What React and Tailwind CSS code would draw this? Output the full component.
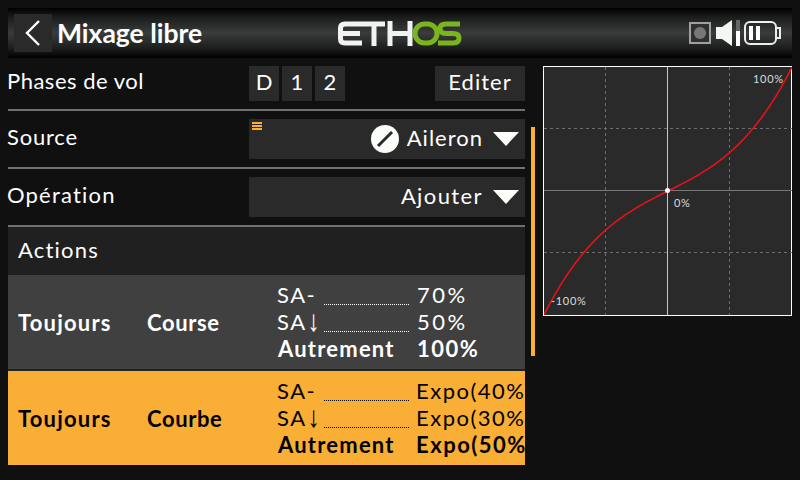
const font = "font-['Lato','Liberation_Sans',sans-serif]";

function Logo() {
  return (
    <svg width="124" height="27" viewBox="0 0 124 27" className="block">
      <g fill="none" strokeWidth="5">
        <path d="M24 4H7Q2.500 4 2.500 8V19Q2.500 23 7 23H24M2.500 13.500H22" stroke="#f2f2f2" />
        <path d="M24 4H47M36 4V26" stroke="#f2f2f2" />
        <path d="M52 1V26M72 1V26M52 13.500H72" stroke="#f2f2f2" />
        <rect x="77" y="4" width="22" height="19" rx="9.500" stroke="#7ab51d" />
        <path d="M122 4H108Q102 4 102 8.750Q102 13.500 108 13.500H115Q121 13.500 121 18.250Q121 23 115 23H100" stroke="#7ab51d" />
      </g>
    </svg>
  );
}

function Curve() {
  const W = 248;
  const c = W / 2;
  const pts = [];
  for (let i = 0; i <= 124; i++) {
    const x = -1 + (2 * i) / 124;
    const y = 0.5 * x * x * x + 0.5 * x;
    pts.push(`${(c + x * c).toFixed(2)},${(c - y * c).toFixed(2)}`);
  }
  return (
    <svg width="248" height="248" viewBox="0 0 248 248" className="block">
      <g stroke="#6e6e6e" strokeWidth="1" strokeDasharray="3 3" fill="none">
        <path d="M61.500 0V248M185.500 0V248M0 61.500H248M0 185.500H248" />
      </g>
      <path d="M0 123.500H248" stroke="#777" strokeWidth="1" />
      <path d="M123.500 0V248" stroke="#f5c078" strokeWidth="1" />
      <polyline points={pts.join(" ")} fill="none" stroke="#f01018" strokeWidth="1.500" />
      <circle cx="123.500" cy="123.500" r="2.500" fill="#fff" />
      <g fill="#dcdcdc" fontSize="11" fontFamily="Lato, sans-serif" letterSpacing="0.7">
        <text x="209" y="16">100%</text>
        <text x="130" y="140">0%</text>
        <text x="7" y="238">-100%</text>
      </g>
    </svg>
  );
}

function Caret() {
  return (
    <svg width="26" height="14" viewBox="0 0 26 14" className="block">
      <path d="M0 0H26L13 14Z" fill="#fbfdf9" />
    </svg>
  );
}

function Row({ label, children, h, labelClass }) {
  return (
    <div className={`flex justify-between border-b-2 border-[#707070] ${h}`}>
      <span className={`-ml-px text-[22px] leading-6 text-white ${labelClass}`}>{label}</span>
      {children}
    </div>
  );
}

function Data({ rows, dot, text, bg, name, kind, valueTrack }) {
  return (
    <div className={`flex h-[94px] items-center pl-[10px] ${bg} ${text}`}>
      <span className="w-[129px] text-[22px] font-bold tracking-[1.2px]">{name}</span>
      <span className="w-[130px] text-[22px] font-bold tracking-[0.6px]">{kind}</span>
      <div className="flex min-w-0 flex-1 -translate-y-px flex-col">
        {rows.map((r, i) => (
          <div key={i} className={`flex h-[27px] items-end whitespace-nowrap text-[22px] leading-[27px] ${r[2] ? "font-bold" : "tracking-[1.5px]"}`}>
            {r[2] ? (
              <span className="w-[140px] shrink-0 pl-px tracking-[1.2px]">{r[0]}</span>
            ) : (
              <>
                <span className="w-[47px] shrink-0">{r[0]}{r[3] && <span className="ml-px inline-block origin-[50%_80%] scale-x-110 scale-y-[1.3] font-['Liberation_Sans'] text-[23px] leading-[18px]">↓</span>}</span>
                <span className={`mb-[3px] mr-[8px] h-px w-[85px] shrink-0 border-b border-dotted ${dot}`} />
              </>
            )}
            <span className={r[2] ? valueTrack[1] : valueTrack[0]}>{r[1]}</span>
          </div>
        ))}
      </div>
    </div>
  );
}

export default function App() {
  return (
    <div className={`h-[480px] w-[800px] overflow-hidden bg-[#101010] pt-2 ${font}`}>
      <header className="mx-2 flex h-[50px] items-center bg-[linear-gradient(#000_0%,#1d1f1f_20%,#3a3c3c_50%,#1d1f1f_80%,#000_100%)]">
        <div className="flex w-[330px] items-center">
          <div className="ml-[6px] flex h-[38px] w-[38px] items-center justify-center bg-[#2a2a2a]">
            <svg width="20" height="30" viewBox="0 0 20 30"><path d="M16 3L4 15L16 27" fill="none" stroke="#fff" strokeWidth="2.400" /></svg>
          </div>
          <span className="ml-[5px] text-[26.500px] font-bold leading-none text-white">Mixage libre</span>
        </div>
        <Logo />
        <div className="flex flex-1 items-center justify-end gap-[5px] pr-[10px]">
          <div className="flex h-[22px] w-[22px] items-center justify-center border-2 border-[#a0a0a0] bg-[#303030]">
            <span className="h-[12px] w-[12px] rounded-full bg-[#777]" />
          </div>
          <svg width="25" height="26" viewBox="0 0 25 26" className="block">
            <path d="M0 7H6L16 0V26L6 19H0Z" fill="#f4f6f2" />
            <rect x="20" y="0" width="4" height="11" fill="#666" />
            <rect x="20" y="11" width="4" height="15" fill="#fff" />
          </svg>
          <svg width="38" height="24" viewBox="0 0 38 24" className="-ml-[2px] block">
            <rect x="1" y="1" width="31" height="22" rx="5" fill="none" stroke="#eee" strokeWidth="2" />
            <path d="M33 7H36V17H33" fill="none" stroke="#eee" strokeWidth="2" />
            <rect x="5" y="5" width="4" height="14" fill="#fff" />
            <rect x="12" y="5" width="4" height="14" fill="#fff" />
          </svg>
        </div>
      </header>

      <main className="flex pl-2">
        <section className="w-[517px]">
          <Row label="Phases de vol" h="h-[53px]" labelClass="pt-[11px] tracking-[0.5px]">
            <div className="flex h-[35px] w-[276px] translate-y-2 items-center">
              {["D", "1", "2"].map((k) => (
                <span key={k} className="mr-[3px] flex h-[35px] w-[30px] items-center justify-center bg-[#2a2a2a] pb-1 text-[22px] text-white">{k}</span>
              ))}
              <span className="ml-auto flex h-[35px] w-[90px] items-center justify-center bg-[#2a2a2a] pb-1 text-[22px] tracking-[1px] text-white">Editer</span>
            </div>
          </Row>
          <Row label="Source" h="h-[58px] items-center" labelClass="-translate-y-[2px] tracking-[0.8px]">
            <div className="relative flex h-[40px] w-[276px] items-center justify-end gap-[8px] bg-[#2a2a2a] pr-[6px] text-[22px] tracking-[1px] text-white">
              <span className="absolute left-[3px] top-[3px] flex w-[10px] flex-col gap-px">
                <i className="block h-[2px] bg-[#f9ae36]" /><i className="block h-[2px] bg-[#f9ae36]" /><i className="block h-[2px] bg-[#f9ae36]" />
              </span>
              <svg width="28" height="28" viewBox="0 0 28 28" className="block">
                <circle cx="14" cy="14" r="14" fill="#fbfdf9" />
                <path d="M7 21L21 7" stroke="#2a2a2a" strokeWidth="3" />
              </svg>
              <span className="pb-1">Aileron</span>
              <span className="ml-[2px]"><Caret /></span>
            </div>
          </Row>
          <Row label="Opération" h="h-[58px] items-center" labelClass="-translate-y-[2px] tracking-[1.200px]">
            <div className="flex h-[40px] w-[276px] items-center justify-end gap-[10px] bg-[#2a2a2a] pr-[6px] text-[22px] tracking-[1.400px] text-white">
              <span className="pb-1">Ajouter</span>
              <Caret />
            </div>
          </Row>
          <div className="flex h-[48px] items-center bg-[#202020] pb-1 pl-[10px] text-[22px] tracking-[1.200px] text-white">Actions</div>
          <div className="flex flex-col gap-[2px] bg-[#222]">
            <Data name="Toujours" kind="Course" bg="bg-[#404040]" text="text-white" dot="border-white" valueTrack={["tracking-[2.500px]", "tracking-[1.500px]"]} rows={[["SA-", "70%"], ["SA", "50%", false, true], ["Autrement", "100%", true]]} />
            <Data name="Toujours" kind="Courbe" bg="bg-[#f9ae36]" text="text-black" dot="border-black" valueTrack={["-ml-px tracking-[1.500px]", "-ml-px tracking-[1.500px]"]} rows={[["SA-", "Expo(40%"], ["SA", "Expo(30%", false, true], ["Autrement", "Expo(50%", true]]} />
          </div>
        </section>
        <div className="ml-[6px] mt-[69px] h-[229px] w-[4px] bg-[#f9ae36]" />
        <aside className="ml-[8px] mt-2 h-[250px] w-[249px] border border-white bg-[#2a2a2a]">
          <Curve />
        </aside>
      </main>
    </div>
  );
}
